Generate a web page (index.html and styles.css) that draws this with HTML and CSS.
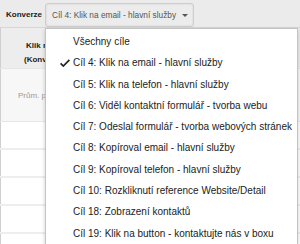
FILE: index.html
```html
<!DOCTYPE html>
<html>
<head>
  <title>Konverze</title>
  <link rel="stylesheet" href="styles.css">
</head>
<body>
  <div id="page">
    <div id="toolbar">
      <div class="toolbar-label">Konverze</div>
      <div class="goal-select">
        <span class="goal-select-text">Cíl 4: Klik na email - hlavní služby</span>
        <span class="goal-select-arrow"></span>
      </div>
    </div>
    <table id="report">
      <tr class="report-head">
        <th><span class="head-line first">Klik na email</span><span class="head-line">(Konverze)</span></th>
        <th></th>
      </tr>
      <tr class="report-avg">
        <td class="avg-cell">Prům. pro zobrazení</td>
        <td></td>
      </tr>
      <tr class="report-row"><td></td><td></td></tr>
      <tr class="report-row"><td></td><td></td></tr>
      <tr class="report-row"><td></td><td></td></tr>
      <tr class="report-row"><td></td><td></td></tr>
      <tr class="report-row last"><td></td><td></td></tr>
    </table>
    <ul id="goal-menu">
      <li class="goal-item">Všechny cíle</li>
      <li class="goal-item selected">
        <svg class="check" width="10" height="8" viewBox="0 0 10 8"><path d="M0.6 4.3 L3.3 7 L9.4 0.8" fill="none" stroke="#222" stroke-width="1.7"/></svg>
        Cíl 4: Klik na email - hlavní služby
      </li>
      <li class="goal-item">Cíl 5: Klik na telefon - hlavní služby</li>
      <li class="goal-item">Cíl 6: Viděl kontaktní formulář - tvorba webu</li>
      <li class="goal-item">Cíl 7: Odeslal formulář - tvorba webových stránek</li>
      <li class="goal-item">Cíl 8: Kopíroval email - hlavní služby</li>
      <li class="goal-item">Cíl 9: Kopíroval telefon - hlavní služby</li>
      <li class="goal-item">Cíl 10: Rozkliknutí reference Website/Detail</li>
      <li class="goal-item">Cíl 18: Zobrazení kontaktů</li>
      <li class="goal-item">Cíl 19: Klik na button - kontaktujte nás v boxu</li>
    </ul>
  </div>
</body>
</html>
```

FILE: styles.css
```css
html, body {
  margin: 0;
  height: 100%;
  background-color: #fff;
  font-family: "Liberation Sans", Arial, sans-serif;
  overflow: hidden;
}
#page {
  position: relative;
  height: 244px;
  overflow: hidden;
}
#toolbar {
  height: 28px;
  box-sizing: border-box;
  display: flex;
  align-items: flex-start;
  padding: 3px 0 0 6px;
  background-color: #ebebeb;
  border-bottom: 1px solid #d6d6d6;
}
.toolbar-label {
  width: 39px;
  font-size: 8px;
  font-weight: bold;
  color: #222;
  line-height: 24px;
}
.goal-select {
  width: 149px;
  height: 24px;
  box-sizing: border-box;
  display: flex;
  align-items: center;
  justify-content: space-between;
  padding: 0 5px 0 6px;
  background-color: #ececec;
  border: 1px solid #cdcdcd;
  border-radius: 3px;
  box-shadow: inset 0 0 2px rgba(0,0,0,0.12);
}
.goal-select-text {
  font-size: 8.3px;
  color: #555;
  white-space: nowrap;
}
.goal-select-arrow {
  width: 0;
  height: 0;
  border-left: 3px solid transparent;
  border-right: 3px solid transparent;
  border-top: 3px solid #555;
}
#report {
  border-collapse: collapse;
  width: 300px;
  border-left: 1px solid #cfcfcf;
}
#report td, #report th {
  padding: 0;
  border-bottom: 1px solid #e6e6e6;
}
.report-head th {
  height: 40px;
  vertical-align: top;
  background-color: #ededed;
  width: 120px;
  text-align: left;
  font-size: 8px;
  font-weight: bold;
  color: #222;
  border-bottom: 1px solid #dadada;
}
.head-line {
  display: block;
  padding-left: 23px;
  line-height: 14px;
}
.head-line.first {
  padding-left: 25px;
  padding-top: 11px;
}
.report-avg td {
  height: 52px;
  background-color: #f7f7f7;
}
.avg-cell {
  font-size: 8px;
  color: #999;
  padding-left: 17px !important;
}
.report-row td {
  height: 26px;
  border-bottom: 2px solid #eeeeee !important;
}
.report-row.last td {
  height: 10px;
}
#goal-menu {
  position: absolute;
  top: 28px;
  left: 45px;
  width: 253px;
  margin: 0;
  padding: 2px 0 0 0;
  list-style: none;
  box-sizing: border-box;
  height: 216px;
  background-color: #fff;
  border: 1px solid #c4c4c4;
  border-bottom: 0;
  box-shadow: 0 2px 4px rgba(0,0,0,0.2);
}
.goal-item {
  position: relative;
  font-size: 10px;
  line-height: 21.3px;
  padding-left: 27px;
  color: #222;
  white-space: nowrap;
}
.check {
  position: absolute;
  left: 14px;
  top: 7px;
}
```
